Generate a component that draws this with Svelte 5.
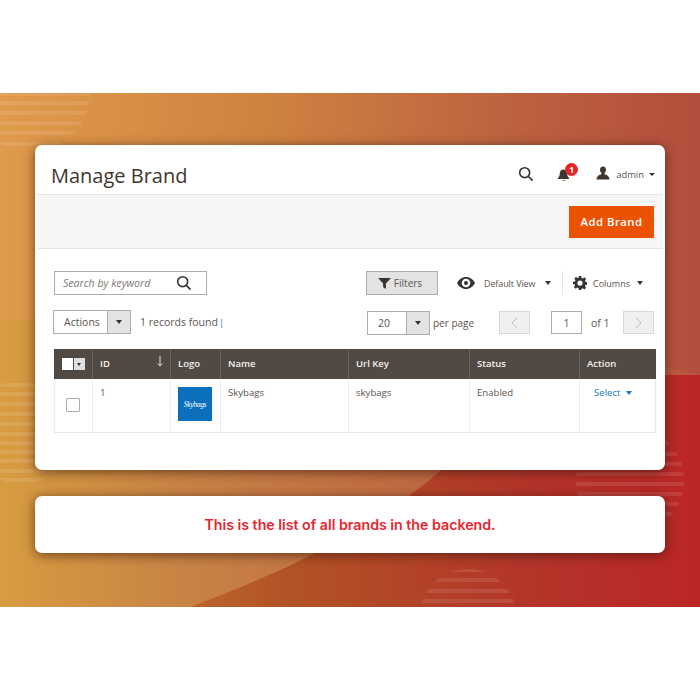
<script>
  const circles = [
    { id: 'a', cx: 30, cy: 92, r: 60, ys: [94, 103, 113, 123, 133, 144] },
    { id: 'b', cx: 22, cy: 432, r: 52, ys: [385, 394, 404, 414, 424, 434, 443, 452, 461, 471, 480] },
    { id: 'c', cx: 630, cy: 480, r: 54, ys: [430, 442, 454, 464, 474, 484, 494, 504, 514, 524] },
    { id: 'd', cx: 468, cy: 618, r: 49, ys: [570, 580, 591, 601] }
  ];
  const columns = ['', 'ID', 'Logo', 'Name', 'Url Key', 'Status', 'Action'];
</script>

<div class="page">
  <section class="stage">
    <svg class="art" viewBox="0 0 700 514" aria-hidden="true">
      <defs>
        <linearGradient id="base" x1="0" x2="1" y1="0" y2="0">
          <stop offset="0" stop-color="#d08a3a" />
          <stop offset="0.4" stop-color="#b25425" />
          <stop offset="0.75" stop-color="#b3352a" />
          <stop offset="1" stop-color="#bb2625" />
        </linearGradient>
        <linearGradient id="wave" x1="0" x2="1" y1="0" y2="0">
          <stop offset="0" stop-color="#d89c40" />
          <stop offset="0.25" stop-color="#c98445" />
          <stop offset="0.6" stop-color="#bf6a42" />
          <stop offset="1" stop-color="#b9583f" />
        </linearGradient>
        <linearGradient id="top" x1="0" x2="1" y1="0" y2="0">
          <stop offset="0" stop-color="#e09a4b" />
          <stop offset="0.4" stop-color="#cd8140" />
          <stop offset="0.75" stop-color="#bb6040" />
          <stop offset="1" stop-color="#b34e3c" />
        </linearGradient>
        {#each circles as c}
          <clipPath id={c.id}><circle cx={c.cx} cy={c.cy - 93} r={c.r} /></clipPath>
        {/each}
      </defs>
      <rect width="700" height="514" fill="url(#base)" />
      <path d="M0 0H700V282H600C520 282 470 350 440 378C370 440 280 480 190 514H0Z" fill="url(#wave)" />
      <path d="M0 229C160 205 450 225 700 282V0H0Z" fill="url(#top)" />
      {#each circles as c}
        <g clip-path="url(#{c.id})" fill="#fff" fill-opacity="0.1">
          {#each c.ys as y}
            <rect x={c.cx - c.r} y={y - 93 - 2} width={c.r * 2} height="4" />
          {/each}
        </g>
      {/each}
    </svg>

    <article class="card main">
      <header class="head">
        <h1>Manage Brand</h1>
        <div class="head-tools">
          <svg class="i-search" viewBox="0 0 18 18"><circle cx="7.500" cy="7.500" r="5.600" /><path d="M11.600 11.600 16.400 16.400" /></svg>
          <span class="bell">
            <svg viewBox="0 0 14 15"><path d="M7 1.500c-2.600 0-4 2-4 4.400 0 2.400-.9 3.700-2 4.800v1h12v-1c-1.100-1.100-2-2.400-2-4.800C11 3.500 9.600 1.500 7 1.500Z" /><path d="M5.600 12.800a1.500 1.500 0 0 0 2.800 0Z" /></svg>
            <b>1</b>
          </span>
          <span class="user">
            <svg viewBox="0 0 14 14"><path d="M7 .5c-2 0-3 1.500-3 3.300 0 1.300.6 2.500 1.400 3.200v1.200C3.800 8.800.8 9.400.5 13.500h13c-.3-4.100-3.300-4.700-4.900-5.300V7C9.400 6.300 10 5.100 10 3.800 10 2 9 .5 7 .5Z" /></svg>
            admin
            <i class="caret small"></i>
          </span>
        </div>
      </header>

      <div class="actionbar"><button class="primary">Add Brand</button></div>

      <div class="content">
        <div class="row">
          <div class="search">
            <span>Search by keyword</span>
            <svg class="i-search" viewBox="0 0 18 18"><circle cx="7.500" cy="7.500" r="5.600" /><path d="M11.600 11.600 16.400 16.400" /></svg>
          </div>
          <div class="right-tools">
            <button class="filters">
              <svg viewBox="0 0 14 12"><path d="M0 0H14L8.500 6V12L5.500 10V6Z" /></svg>
              Filters
            </button>
            <span class="view">
              <svg viewBox="0 0 18 12"><path fill-rule="evenodd" d="M9 0C5 0 2 2.500 0 6c2 3.500 5 6 9 6s7-2.500 9-6c-2-3.500-5-6-9-6Zm0 1.700a4.300 4.300 0 1 1 0 8.600 4.300 4.300 0 0 1 0-8.600ZM9 4a2 2 0 1 0 0 4 2 2 0 0 0 0-4Z" /></svg>
              Default View
              <i class="caret"></i>
            </span>
            <span class="columns">
              <svg viewBox="0 0 24 24"><path fill-rule="evenodd" d="M10 0h4l.7 3.400 2 .8L19.600 2.300l2.800 2.800-1.900 2.900.8 2 3.400.7v4l-3.400.7-.8 2 1.900 2.900-2.800 2.800-2.900-1.900-2 .8L14 24h-4l-.7-3.400-2-.8-2.900 1.900-2.800-2.800L3.500 16l-.8-2L0 14v-4l3.400-.7.8-2L2.300 4.400l2.800-2.800L8 3.500l2-.8L10 0Zm2 7.500a4.500 4.500 0 1 0 0 9 4.500 4.500 0 0 0 0-9Z" /></svg>
              Columns
              <i class="caret"></i>
            </span>
          </div>
        </div>

        <div class="row second">
          <div class="left-tools">
            <div class="select actions"><span>Actions</span><em><i class="caret"></i></em></div>
            <span class="found">1 records found<u>|</u></span>
          </div>
          <div class="pager">
            <div class="select perpage"><span>20</span><em><i class="caret"></i></em></div>
            <span class="per">per page</span>
            <span class="nav prev"><svg viewBox="0 0 8 14"><path d="M7 1 1 7l6 6" /></svg></span>
            <span class="pageno">1</span>
            <span class="of">of 1</span>
            <span class="nav"><svg viewBox="0 0 8 14"><path d="m1 1 6 6-6 6" /></svg></span>
          </div>
        </div>

        <div class="table">
          {#each columns as col, i}
            <div class="th">
              {#if i === 0}
                <span class="masscheck"><span></span><em><i class="caret tiny"></i></em></span>
              {:else}
                {col}
                {#if col === 'ID'}<svg class="arrow" viewBox="0 0 8 12"><path d="M4 0v10M1.500 8 4 11l2.500-3" /></svg>{/if}
              {/if}
            </div>
          {/each}
          <div class="td check"><span class="box"></span></div>
          <div class="td">1</div>
          <div class="td logo"><span class="logobox">Skybags</span></div>
          <div class="td">Skybags</div>
          <div class="td">skybags</div>
          <div class="td">Enabled</div>
          <div class="td select-link"><span>Select</span><i class="caret blue"></i></div>
        </div>
      </div>
    </article>

    <article class="card note">This is the list of all brands in the backend.</article>
  </section>
</div>

<style>
  :global(body) { margin: 0; background: #fff; }
  .page { width: 700px; height: 700px; padding-top: 93px; box-sizing: border-box; background: #fff; font-family: "Open Sans", sans-serif; color: #5c5450; }
  .stage { position: relative; width: 700px; height: 514px; padding: 52px 35px 0; box-sizing: border-box; overflow: hidden; display: flex; flex-direction: column; gap: 26px; }
  .art { position: absolute; inset: 0; width: 700px; height: 514px; }
  .card { position: relative; background: #fff; border-radius: 7px; box-shadow: 0 2px 12px rgba(50, 20, 10, .65); }
  .main { height: 325px; }
  .note { height: 57px; display: flex; align-items: center; justify-content: center; font: 600 14.200px Inter, sans-serif; color: #e8262f; }

  .head { height: 49px; display: flex; align-items: center; justify-content: space-between; padding: 0 8px 0 16px; border-bottom: 1px solid #e8e8e8; margin-right: 2px; }
  h1 { margin: 0; font-size: 20px; font-weight: 400; color: #41362f; line-height: 1; padding-top: 12px; }
  .head-tools { display: flex; align-items: center; padding-top: 9px; }
  .head-tools > .i-search { width: 16px; height: 16px; margin-right: 23px; }
  .i-search { fill: none; stroke: #373330; stroke-width: 1.800; }
  .bell { position: relative; width: 14px; height: 15px; margin-right: 25px; }
  .bell svg { display: block; width: 13px; height: 14px; fill: #41362f; margin-top: 1px; }
  .bell b { position: absolute; left: 8px; top: -4px; width: 13px; height: 13px; border-radius: 50%; background: #e22626; color: #fff; font-size: 8.500px; line-height: 13px; text-align: center; }
  .user { display: flex; align-items: center; font-size: 9.400px; color: #5c5450; }
  .user svg { width: 14px; height: 14px; fill: #41362f; margin-right: 6px; margin-top: -2px; }

  .caret { display: inline-block; width: 0; height: 0; border: 3.500px solid transparent; border-top: 4px solid #373330; border-bottom: 0; }
  .caret.small { margin-left: 5px; border-width: 3px; border-top-width: 3.500px; border-bottom: 0; }
  .caret.tiny { border-width: 2.500px; border-top-width: 3.500px; border-bottom: 0; }
  .caret.blue { border-top-color: #1979c3; margin-left: 6px; }

  .actionbar { height: 53px; margin: 0 2px 0 3px; background: #f6f6f6; border-bottom: 1px solid #e4e4e4; display: flex; align-items: center; justify-content: flex-end; padding-right: 9px; }
  .primary { width: 85px; height: 32px; border: 0; background: #eb5202; color: #fff; font: 600 11.300px "Open Sans", sans-serif; letter-spacing: .5px; padding: 0; }

  .content { padding: 22px 9px 0 19px; display: flex; flex-direction: column; }
  .row { display: flex; justify-content: space-between; height: 24px; }
  .second { margin-top: 15px; margin-left: -1px; }
  .search { width: 153px; height: 24px; box-sizing: border-box; border: 1px solid #adadad; display: flex; align-items: center; justify-content: space-between; padding: 0 14px 0 8px; font-size: 10.600px; font-style: italic; color: #807a76; }
  .search .i-search { width: 16px; height: 16px; }
  .right-tools { display: flex; align-items: center; font-size: 9px; margin-right: 13px; }
  .filters { width: 72px; height: 24px; box-sizing: border-box; border: 1px solid #adadad; background: #e3e3e3; display: flex; align-items: center; justify-content: center; gap: 3px; padding: 0 4px 0 0; font: 400 10px "Open Sans", sans-serif; color: #5c5450; }
  .filters svg { width: 13px; height: 11px; fill: #373330; }
  .view { display: flex; align-items: center; margin-left: 19px; width: 106px; height: 24px; border-right: 1px solid #e4e4e4; box-sizing: border-box; letter-spacing: -.1px; }
  .view svg { width: 18px; height: 12px; fill: #373330; margin-right: 9px; }
  .view .caret { margin-left: 10px; }
  .columns { display: flex; align-items: center; margin-left: 10px; }
  .columns svg { width: 14px; height: 14px; fill: #373330; margin-right: 6px; }
  .columns .caret { margin-left: 7px; }

  .left-tools, .pager { display: flex; align-items: center; }
  .select { display: flex; height: 24px; box-sizing: border-box; border: 1px solid #adadad; font-size: 10.500px; color: #5c5450; }
  .select span { flex: 1; display: flex; align-items: center; padding-left: 10px; }
  .select em { width: 22px; background: #e3e3e3; border-left: 1px solid #adadad; display: flex; align-items: center; justify-content: center; }
  .actions { width: 78px; }
  .found { margin-left: 9px; font-size: 10.500px; }
  .found u { text-decoration: none; color: #1979c3; font-size: 9px; margin-left: 1px; }
  .pager { font-size: 10.500px; margin-top: 1px; margin-right: 2px; }
  .perpage { width: 63px; }
  .per { margin-left: 3px; width: 66px; font-size: 10px; }
  .nav { width: 31px; height: 23px; box-sizing: border-box; border: 1px solid #d8d8d8; background: #f0f0f0; display: flex; align-items: center; justify-content: center; }
  .nav svg { width: 7px; height: 12px; fill: none; stroke: #b5b0ac; stroke-width: 1; }
  .pageno { width: 31px; height: 23px; box-sizing: border-box; border: 1px solid #adadad; margin-left: 21px; display: flex; align-items: center; justify-content: center; }
  .of { margin-left: 9px; width: 32px; }

  .table { display: grid; grid-template-columns: 38px 78px 50px 128px 121px 110px 77px; grid-template-rows: 30px 53px; margin-top: 15px; width: 602px; border-bottom: 1px solid #e8e8e8; border-right: 1px solid #e8e8e8; box-sizing: border-box; }
  .th { background: #514943; color: #f4f1ee; font-size: 9.500px; font-weight: 600; display: flex; align-items: center; padding-left: 7px; padding-bottom: 2px; border-left: 1px solid #6b635d; box-sizing: border-box; position: relative; }
  .th:first-child { border-left: 0; padding-left: 8px; padding-bottom: 0; }
  .arrow { position: absolute; right: 6px; top: 7px; width: 8px; height: 11px; fill: none; stroke: #f0ece8; stroke-width: 1; }
  .masscheck { display: flex; width: 23px; height: 12px; }
  .masscheck span { width: 11px; background: #fff; }
  .masscheck em { width: 12px; background: #dfdfdf; display: flex; align-items: center; justify-content: center; margin-left: 1px; }
  .td { border-left: 1px solid #eeeeee; padding: 7px 0 0 7px; font-size: 9.600px; box-sizing: border-box; }
  .check { padding: 0 1px 1px 0; display: flex; align-items: center; justify-content: center; }
  .box { width: 12px; height: 12px; border: 1px solid #adadad; border-radius: 1px; }
  .logo { padding-top: 8px; }
  .logobox { display: flex; align-items: center; justify-content: center; width: 34px; height: 34px; background: #0a6fbd; color: #fff; font: italic 7.500px "Liberation Serif", serif; letter-spacing: -.3px; }
  .select-link { padding-left: 14px; color: #1979c3; display: flex; align-items: flex-start; }
  .select-link .caret { margin-top: 5px; }
</style>
